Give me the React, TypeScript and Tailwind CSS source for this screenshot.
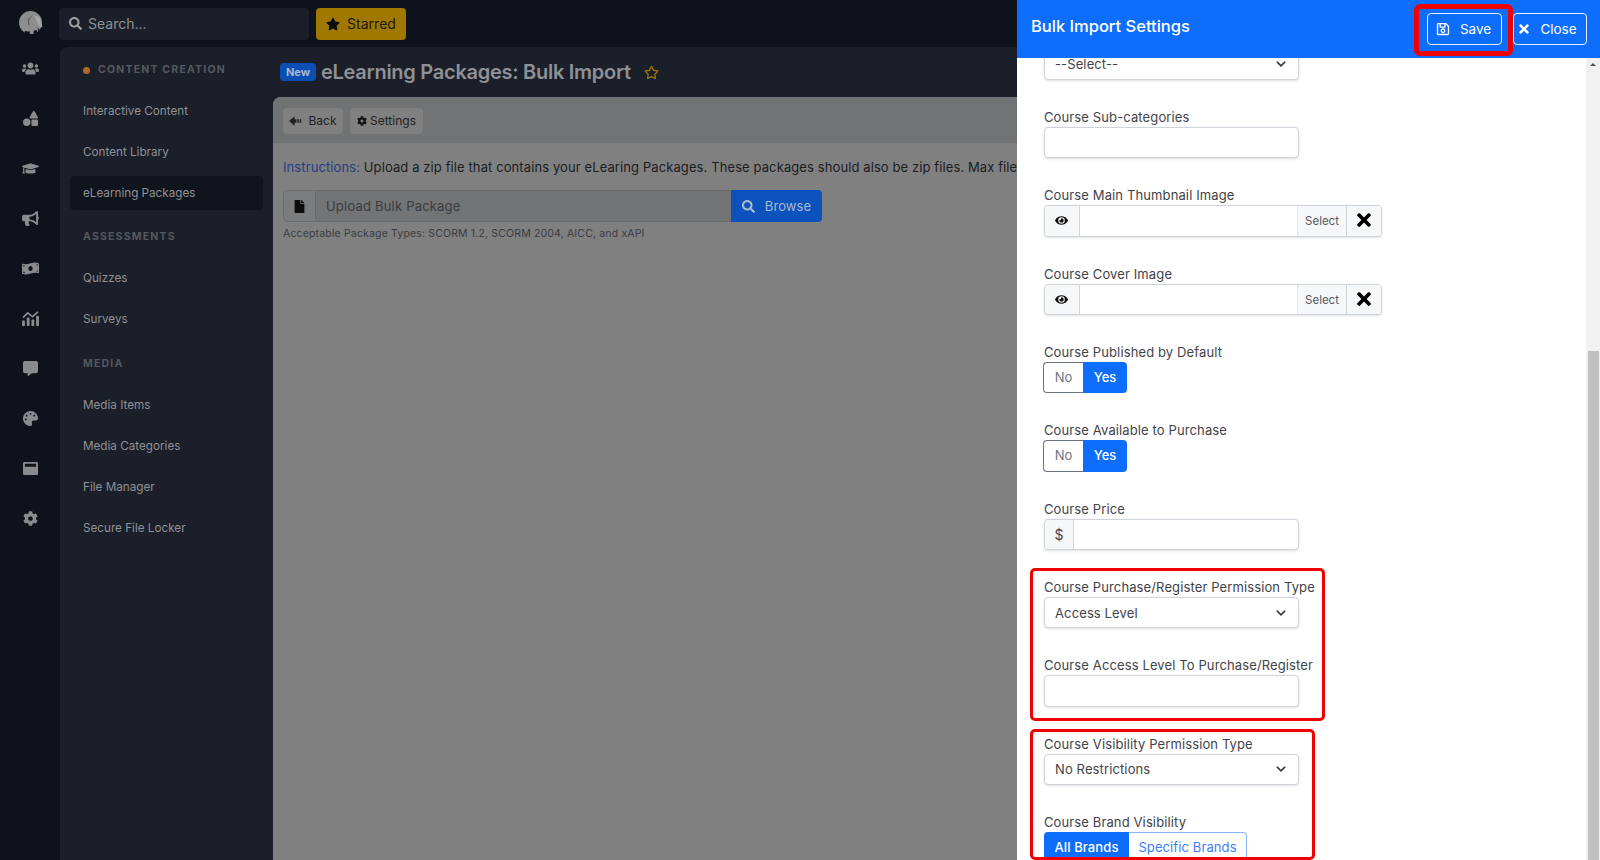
import type { ReactNode } from 'react';
import {
  FaBullhorn, FaCog, FaCommentAlt, FaEye, FaFile, FaGraduationCap, FaMoneyBillWave, FaPalette,
  FaRegSave, FaRegStar, FaSearch, FaShapes, FaStar, FaTimes, FaUsers, FaWindowMaximize,
} from 'react-icons/fa';

const railIcons = [FaUsers, FaShapes, FaGraduationCap, FaBullhorn, FaMoneyBillWave, ChartIcon, FaCommentAlt, FaPalette, FaWindowMaximize, FaCog];

function ChartIcon({ className }: { className?: string }) {
  return (
    <svg viewBox="0 0 18 16" className={className} fill="currentColor">
      <rect x="0" y="10" width="3" height="6" rx="0.5" />
      <rect x="5" y="7" width="3" height="9" rx="0.5" />
      <rect x="10" y="9" width="3" height="7" rx="0.5" />
      <rect x="15" y="5" width="3" height="11" rx="0.5" />
      <path d="M1 7l5-5 5 4 6-5" fill="none" stroke="currentColor" strokeWidth="1.8" />
    </svg>
  );
}

function BackIcon() {
  return (
    <svg viewBox="0 0 14 10" className="w-[13px] h-[10px]" fill="currentColor">
      <path d="M0 5l6-5v3h2v4H6v3z" />
      <rect x="9" y="3" width="1.6" height="4" />
      <rect x="11.6" y="3" width="1.6" height="4" />
    </svg>
  );
}

function Logo() {
  return (
    <svg viewBox="0 0 26 26" className="w-[25px] h-[25px] ml-[3px]">
      <circle cx="12" cy="12" r="12" fill="#8c8d90" />
      <path d="M13 6c-3 1-4 5-2.500 9" fill="none" stroke="#3a3b40" strokeWidth="0.8" />
      <path d="M16 5c3-.5 6 1.500 6.500 5 .3 2.500.5 4.500 2 6.500-1.500.8-3.200-.2-4-2" fill="#a5a6a8" />
      <path d="M6 25v-4.500c2 1 3.500 1 5 .5l.5 4zM15 25l.5-5c1 .5 2 .3 3-.5l.5 5.500z" fill="#0e121b" />
      <path d="M19 17l5 5-2.500 2z" fill="#0e121b" />
    </svg>
  );
}

function SidebarItem({ label, active }: { label: string; active?: boolean }) {
  return (
    <div className={`h-[34px] mb-[7px] mx-[10px] pl-[13px] pt-[2px] flex items-center text-[11.7px] rounded text-[#8f9196] ${active ? 'bg-[#10141c]' : ''}`}>
      {label}
    </div>
  );
}

function SidebarHeading({ label, dot }: { label: string; dot?: boolean }) {
  return (
    <div className="h-[20px] pl-[23px] flex items-center gap-[8px] text-[10.5px] font-bold tracking-[1.2px] text-[#55585f]">
      {dot && <span className="w-[7px] h-[7px] rounded-full bg-[#b3682c]" />}
      {label}
    </div>
  );
}

function Field({ label, children }: { label: string; children: ReactNode }) {
  return (
    <div className="mb-[27px]">
      <div className="h-[20px] leading-[20px] text-[13px] tracking-[0.12px] text-[#3f4348] whitespace-nowrap">{label}</div>
      {children}
    </div>
  );
}

function TextInput() {
  return <div className="w-[255px] h-[31.33px] bg-white border border-[#ced4da] rounded shadow-sm" />;
}

function SelectInput({ value }: { value: string }) {
  return (
    <div className="w-[255px] h-[31.33px] bg-white border border-[#ced4da] rounded shadow-sm flex items-center justify-between pl-[10px] pr-[12px] text-[13px] leading-[14px] tracking-[0.12px] text-[#3f4348]">
      {value}
      <svg viewBox="0 0 16 16" className="w-[10px] h-[10px]" fill="none" stroke="#343a40" strokeWidth="2.4" strokeLinecap="round" strokeLinejoin="round">
        <path d="M2 5l6 6 6-6" />
      </svg>
    </div>
  );
}

function ImagePicker() {
  return (
    <div className="w-[338px] h-[31.33px] bg-white border border-[#ced4da] rounded shadow-sm flex overflow-hidden">
      <div className="w-[35px] pr-[1px] flex items-center justify-center bg-[#f6f7f8] border-r border-[#ced4da]">
        <FaEye className="w-[13px] h-[13px] text-[#111]" />
      </div>
      <div className="flex-1" />
      <div className="w-[49px] pt-[2px] flex items-center justify-center bg-[#f6f7f8] border-l border-[#e3e6e9] text-[11.5px] text-[#555a60]">Select</div>
      <div className="w-[35px] flex items-center justify-center bg-[#f6f7f8] border-l border-[#ced4da]">
        <FaTimes className="w-[20px] h-[20px] text-black mt-[-1px]" />
      </div>
    </div>
  );
}

function YesNo() {
  return (
    <div className="flex w-[84px] h-[31.33px] -ml-px text-[13px]">
      <div className="w-[40px] flex items-center justify-center bg-white border border-[#6c757d] border-r-0 rounded-l text-[#6c757d]">No</div>
      <div className="flex-1 flex items-center justify-center bg-[#0d6efd] rounded-r text-white font-medium">Yes</div>
    </div>
  );
}

export default function App() {
  return (
    <div className="relative w-[1600px] h-[860px] overflow-hidden flex font-['Inter',sans-serif] bg-[#0e121b]">
      {/* Icon rail */}
      <div className="w-[60px] shrink-0 flex flex-col items-center">
        <div className="h-[47px] flex items-center">
          <Logo />
        </div>
        <div className="mt-[-3.500px] flex flex-col items-center">
          {railIcons.map((Icon, i) => (
            <div key={i} className="h-[50px] flex items-center justify-center text-[#8a8b8e]">
              <Icon className="w-[17px] h-[15px]" />
            </div>
          ))}
        </div>
      </div>

      <div className="flex-1 flex flex-col min-w-0">
        {/* Top bar */}
        <div className="h-[47px] shrink-0 -ml-px flex items-center gap-[7px]">
          <div className="w-[250px] h-[32px] bg-[#1a1f29] rounded flex items-center gap-[6px] pl-[10px] text-[14px] text-[#8f9196]">
            <FaSearch className="w-[13px] h-[13px] text-[#a0a1a4]" />
            Search...
          </div>
          <div className="w-[90px] h-[32px] bg-[#a07800] rounded flex items-center justify-center gap-[7px] text-[14px] text-[#1d1a0a]">
            <FaStar className="w-[14px] h-[14px] text-[#0c0c0c]" />
            Starred
          </div>
        </div>

        <div className="flex-1 flex bg-[#1a1f29] rounded-tl-lg min-h-0">
          {/* Section sidebar */}
          <div className="w-[213px] shrink-0 pt-[13px]">
            <SidebarHeading label="CONTENT CREATION" dot />
            <div className="h-[14px]" />
            <SidebarItem label="Interactive Content" />
            <SidebarItem label="Content Library" />
            <SidebarItem label="eLearning Packages" active />
            <div className="h-[10px]" />
            <SidebarHeading label="ASSESSMENTS" />
            <div className="h-[14px]" />
            <SidebarItem label="Quizzes" />
            <SidebarItem label="Surveys" />
            <div className="h-[11px]" />
            <SidebarHeading label="MEDIA" />
            <div className="h-[14px]" />
            <SidebarItem label="Media Items" />
            <SidebarItem label="Media Categories" />
            <SidebarItem label="File Manager" />
            <SidebarItem label="Secure File Locker" />
          </div>

          {/* Main area */}
          <div className="flex-1 flex flex-col min-w-0">
            <div className="h-[50px] shrink-0 flex items-center pl-[7px]">
              <span className="w-[36px] h-[18px] bg-[#0b4fb3] rounded flex items-center justify-center text-[11px] font-bold text-[#a9b8cf]">New</span>
              <span className="ml-[5px] text-[20px] font-semibold tracking-[-0.27px] text-[#8f9196]">eLearning Packages: Bulk Import</span>
              <FaRegStar className="ml-[13px] w-[15px] h-[15px] text-[#a07800]" />
            </div>
            <div className="flex-1 bg-[#808080] rounded-tl-lg overflow-hidden">
              <div className="h-[46px] pt-[1px] bg-[#707274] flex items-center gap-[7px] pl-[10px]">
                <div className="w-[60px] h-[26px] bg-[#808080] rounded flex items-center justify-center gap-[6px] text-[12px] text-[#222]">
                  <BackIcon />
                  Back
                </div>
                <div className="w-[73px] h-[26px] bg-[#808080] rounded flex items-center justify-center gap-[3px] text-[12px] text-[#222]">
                  <FaCog className="w-[10px] h-[10px] text-[#111]" />
                  Settings
                </div>
              </div>
              <div className="pl-[10px] pt-[14px]">
                <div className="h-[20px] leading-[20px] whitespace-nowrap text-[13px] tracking-[0.1px] text-[#1c1d20]">
                  <span className="text-[#263f82]">Instructions:</span> Upload a zip file that contains your eLearing Packages. These packages should also be zip files. Max file size: 2GB
                </div>
                <div className="mt-[13px] flex h-[32px] w-[539px]">
                  <div className="w-[33px] flex items-center justify-center bg-[#7b7c7d] border border-[#696b6d] rounded-l">
                    <FaFile className="w-[11px] h-[13px] text-[#0c0c0c]" />
                  </div>
                  <div className="flex-1 flex items-center pl-[10px] pt-[1px] bg-[#737476] border-y border-[#696b6d] text-[13px] tracking-[0.2px] text-[#3a3c40]">Upload Bulk Package</div>
                  <div className="w-[91px] pt-[1px] flex items-center justify-center gap-[10px] bg-[#0b52bd] rounded-r text-[13px] tracking-[0.1px] text-[#a9b8cf]">
                    <FaSearch className="w-[13px] h-[13px]" />
                    Browse
                  </div>
                </div>
                <div className="mt-[4px] text-[10.5px] tracking-[0.16px] text-[#3a3c40]">Acceptable Package Types: SCORM 1.2, SCORM 2004, AICC, and xAPI</div>
              </div>
            </div>
          </div>
        </div>
      </div>

      {/* Settings drawer */}
      <div className="absolute top-0 right-0 bottom-0 w-[583px] bg-white flex flex-col">
        <div className="h-[58px] shrink-0 bg-[#0d6efd] flex items-center justify-between pl-[14px] pr-[13px] text-white">
          <span className="text-[16.5px] font-medium mt-[-5px]">Bulk Import Settings</span>
          <div className="flex items-center gap-[11px]">
            <div className="w-[75px] h-[32px] border border-white/90 rounded flex items-center justify-center gap-[10px] pr-[2px] text-[13.5px]">
              <FaRegSave className="w-[14px] h-[14px]" />
              Save
            </div>
            <div className="w-[74px] h-[32px] border border-white/90 rounded flex items-center justify-center gap-[9px] pr-[6px] text-[13.5px]">
              <FaTimes className="w-[14px] h-[14px]" />
              Close
            </div>
          </div>
        </div>
        <div className="flex-1 flex min-h-0">
          <div className="flex-1 overflow-hidden pl-[27px]">
            <div className="mt-[-9.33px]">
              <div className="mb-[27px]"><SelectInput value="--Select--" /></div>
              <Field label="Course Sub-categories"><TextInput /></Field>
              <Field label="Course Main Thumbnail Image"><ImagePicker /></Field>
              <Field label="Course Cover Image"><ImagePicker /></Field>
              <Field label="Course Published by Default"><YesNo /></Field>
              <Field label="Course Available to Purchase"><YesNo /></Field>
              <Field label="Course Price">
                <div className="w-[255px] h-[31.33px] bg-white border border-[#ced4da] rounded shadow-sm flex">
                  <div className="w-[29px] flex items-center justify-center bg-[#f6f7f8] border-r border-[#ced4da] rounded-l text-[14px] text-[#3f4348]">$</div>
                </div>
              </Field>
              <Field label="Course Purchase/Register Permission Type"><SelectInput value="Access Level" /></Field>
              <Field label="Course Access Level To Purchase/Register"><TextInput /></Field>
              <Field label="Course Visibility Permission Type"><SelectInput value="No Restrictions" /></Field>
              <Field label="Course Brand Visibility">
                <div className="flex h-[31.33px] text-[13px] tracking-[0.1px]">
                  <div className="w-[85px] flex items-center justify-center bg-[#0d6efd] rounded-l text-white font-medium">All Brands</div>
                  <div className="w-[118px] flex items-center justify-center border border-[#8ab6fe] border-l-0 rounded-r text-[#3d7dfd]">Specific Brands</div>
                </div>
              </Field>
            </div>
          </div>
          {/* Scrollbar */}
          <div className="w-[14px] shrink-0 bg-[#f1f1f1] relative">
            <div className="absolute top-[5px] left-[4px] w-0 h-0 border-x-[3px] border-x-transparent border-b-[3px] border-b-[#505050]" />
            <div className="absolute top-[293px] bottom-0 left-[2px] right-[1px] bg-[#c1c1c1]" />
          </div>
        </div>
      </div>

      {/* Red annotation boxes */}
      <div className="absolute left-[1414px] top-[4px] w-[99px] h-[52px] border-[5px] border-[#f00000] rounded-[6px]" />
      <div className="absolute left-[1030px] top-[568px] w-[295px] h-[153px] border-[3px] border-[#f00000] rounded-[5px]" />
      <div className="absolute left-[1030px] top-[729px] w-[285px] h-[131px] border-[3px] border-[#f00000] rounded-[5px]" />
    </div>
  );
}
